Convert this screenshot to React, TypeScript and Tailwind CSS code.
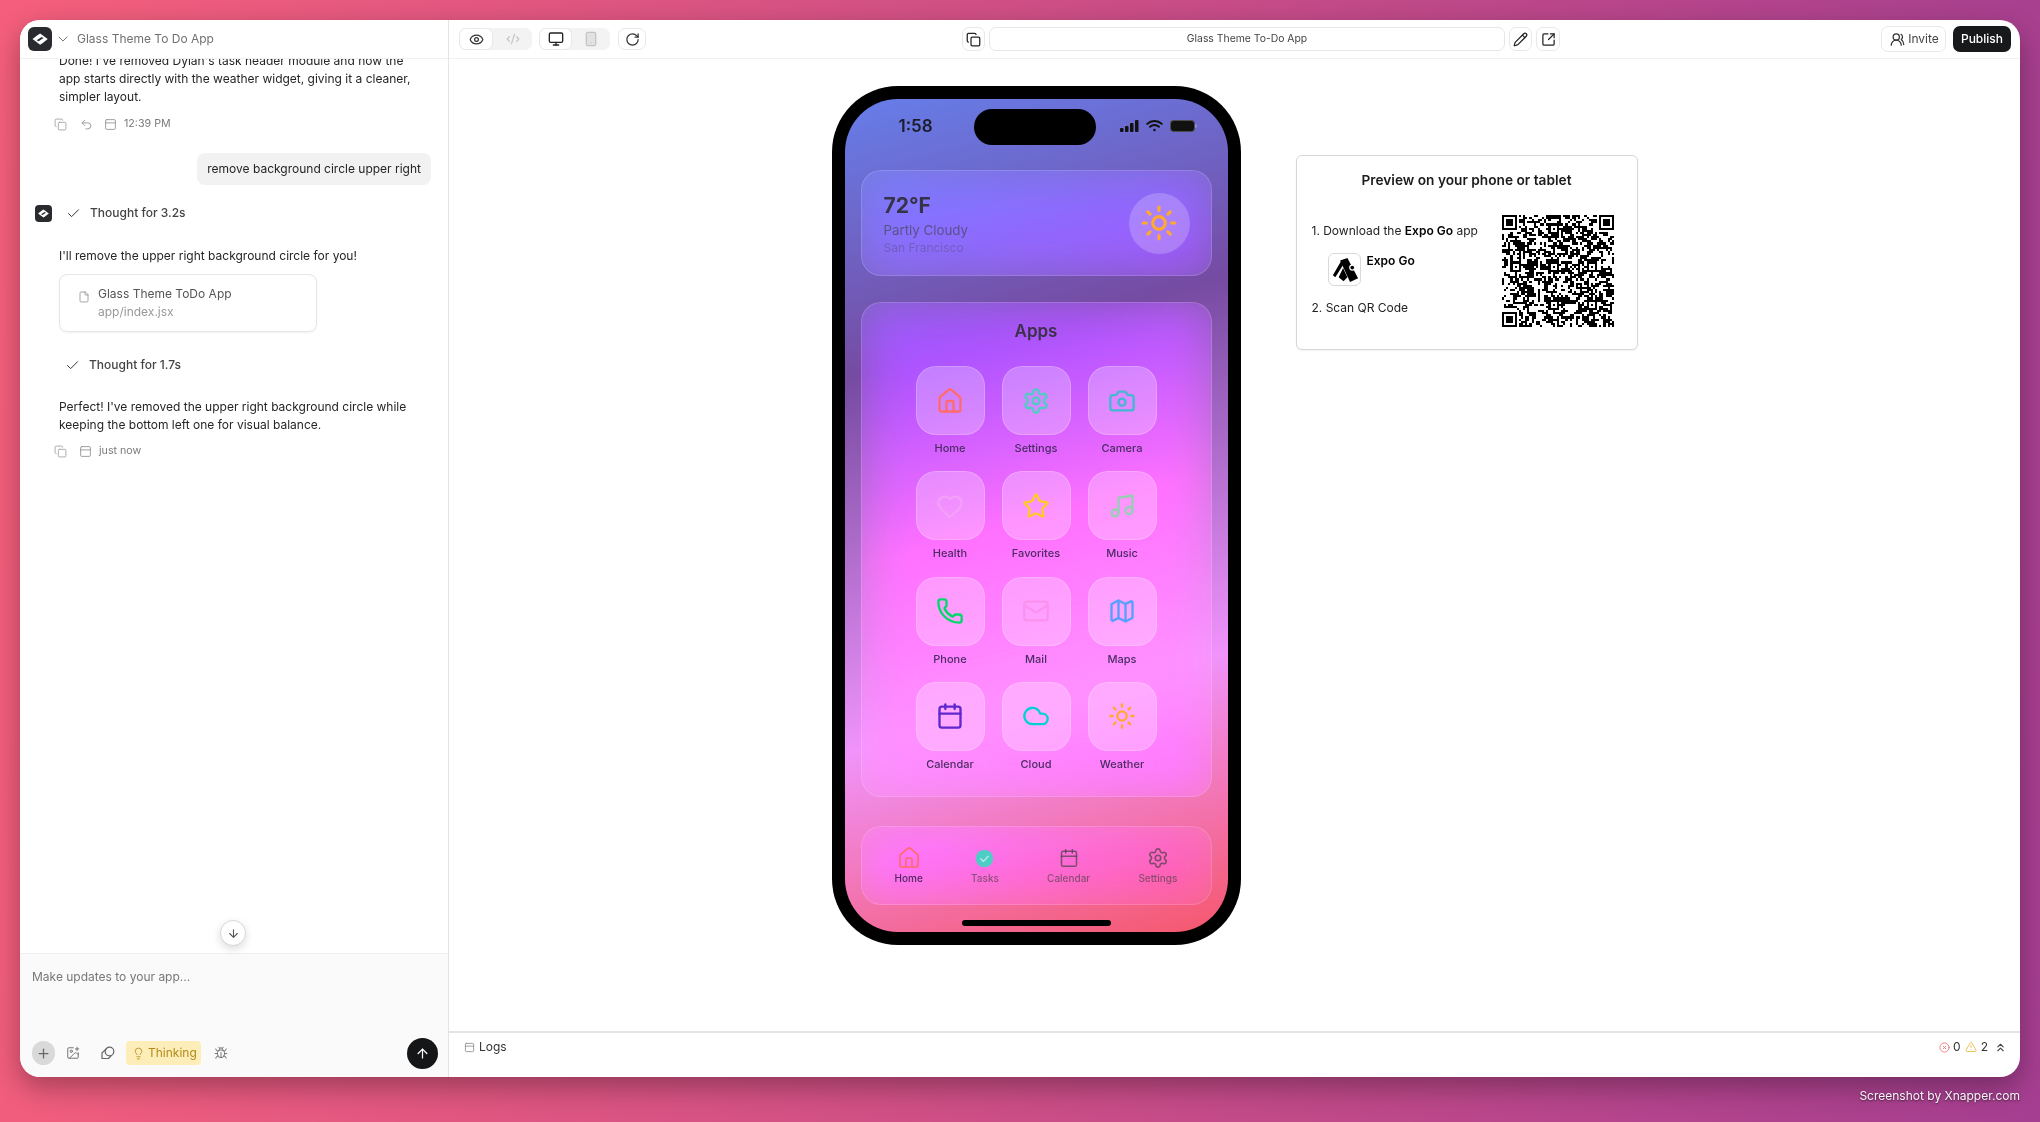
import React from "react";
import {
  House, Settings, Camera, Heart, Star, Music, Phone, Mail, Map as MapIcon, Calendar, Cloud, Sun,
  Copy, Undo2, PanelTop, File, Check, ChevronDown, ArrowDown, ArrowUp, Plus, ImagePlus,
  Lightbulb, Bug, Eye, CodeXml, Monitor, Smartphone, RotateCw, Pencil, SquareArrowOutUpRight,
  UsersRound, ChevronsUp, CircleX, TriangleAlert,
} from "lucide-react";

function Logo({ size, radius }: { size: number; radius: string }) {
  return (
    <div className={`flex items-center justify-center bg-[#2a2b2e] shrink-0 ${radius}`} style={{ width: size, height: size }}>
      <svg viewBox="0 0 24 24" width={size * 0.76} height={size * 0.76}>
        <path d="M12 4.500 22 12l-6.500 5-3.500 2.500L2 12l6.500-5z" fill="#fff" />
        <path d="M7.500 13.500 14 9.300l2.500 1.200-6.500 4.200z" fill="#2a2b2e" />
      </svg>
    </div>
  );
}

function QR() {
  const n = 53;
  let seed = 48271;
  const rnd = () => {
    seed = (seed * 16807) % 2147483647;
    return seed / 2147483647;
  };
  const grid: boolean[][] = [];
  for (let y = 0; y < n; y++) {
    const row: boolean[] = [];
    for (let x = 0; x < n; x++) {
      const prevL = x > 0 ? row[x - 1] : false;
      const prevT = y > 0 ? grid[y - 1][x] : false;
      row.push(rnd() < 0.36 + (prevL ? 0.14 : 0) + (prevT ? 0.14 : 0));
    }
    grid.push(row);
  }
  const stamp = (cx: number, cy: number, size: number, quiet: boolean) => {
    for (let y = -1; y <= size; y++)
      for (let x = -1; x <= size; x++) {
        const gx = cx + x;
        const gy = cy + y;
        if (gx < 0 || gy < 0 || gx >= n || gy >= n) continue;
        const outside = x < 0 || y < 0 || x >= size || y >= size;
        if (outside) {
          if (quiet) grid[gy][gx] = false;
          continue;
        }
        const ring = x === 0 || y === 0 || x === size - 1 || y === size - 1;
        const mid = size === 7 ? x >= 2 && x <= 4 && y >= 2 && y <= 4 : x === 2 && y === 2;
        grid[gy][gx] = ring || mid;
      }
  };
  stamp(0, 0, 7, true);
  stamp(n - 7, 0, 7, true);
  stamp(0, n - 7, 7, true);
  [[22, 4], [4, 22], [22, 22], [40, 22], [22, 40], [40, 40]].forEach(([a, b]) => stamp(a, b, 5, false));
  let d = "";
  grid.forEach((r, y) => r.forEach((v, x) => { if (v) d += `M${x} ${y}h1v1h-1z`; }));
  return (
    <svg viewBox={`0 0 ${n} ${n}`} width={112} height={112} shapeRendering="crispEdges" className="shrink-0">
      <path d={d} fill="#000" />
    </svg>
  );
}

function Tile({ label, icon: I, color }: { label: string; icon: any; color: string }) {
  return (
    <div className="flex flex-col items-center">
      <div className="w-[69px] h-[69px] rounded-[20px] bg-white/25 border border-white/20 flex items-center justify-center">
        <I size={28} color={color} strokeWidth={2} />
      </div>
      <div className="mt-[6px] h-[14px] leading-[14px] text-[11px] font-medium text-[#4b2c63] whitespace-nowrap">{label}</div>
    </div>
  );
}

function NavItem({ label, active, children }: { label: string; active?: boolean; children: React.ReactNode }) {
  return (
    <div className="flex flex-col items-center">
      <div className="h-6 flex items-center justify-center">{children}</div>
      <div className={`mt-[1px] text-[10px] leading-[14px] font-medium ${active ? "text-[#4f2a63]" : "text-[#3c3c3c]/60"}`}>{label}</div>
    </div>
  );
}

function Actions({ undo, time }: { undo?: boolean; time: string }) {
  return (
    <div className="flex items-center h-[14px] ml-[-5px] text-[#9a9a9a]">
      <Copy size={13} strokeWidth={1.5} />
      {undo && <Undo2 size={13} strokeWidth={1.5} className="ml-[13px] text-[#8a8a8a]" />}
      <PanelTop size={13} strokeWidth={1.5} className={undo ? "ml-[11px] text-[#8a8a8a]" : "ml-3 text-[#8a8a8a]"} />
      <span className="ml-[7px] text-[10.700px] text-[#7a7a7a]">{time}</span>
    </div>
  );
}

function Thought({ t, className }: { t: string; className?: string }) {
  return (
    <div className={`flex items-center h-[18px] text-[12px] font-medium text-[#444] ${className ?? ""}`}>
      <Check size={15} strokeWidth={1.6} className="text-[#333] mr-[9px]" />
      {t}
    </div>
  );
}

function Sidebar() {
  return (
    <aside className="w-[429px] shrink-0 border-r border-[#e4e4e4] flex flex-col">
      <div className="h-[39px] shrink-0 border-b border-[#f1f1f1] flex items-center pl-[8px] relative z-10 bg-white">
        <Logo size={24} radius="rounded-[6px]" />
        <ChevronDown size={16} strokeWidth={1.5} className="ml-[3px] text-[#777]" />
        <span className="ml-[6px] text-[12px] text-[#717171]">Glass Theme To Do App</span>
      </div>
      <div className="flex-1 relative min-h-0">
        <div className="h-full overflow-hidden">
          <div className="-mt-[7px] pl-[39px] pr-[17px] text-[12px] leading-[18px] text-[#252525]">
            <p className="w-[365px]">Done! I've removed Dylan's task header module and now the app starts directly with the weather widget, giving it a cleaner, simpler layout.</p>
            <div className="mt-[11px]"><Actions undo time="12:39 PM" /></div>
            <div className="mt-[22px] flex justify-end">
              <div className="h-8 flex items-center px-[10px] rounded-lg bg-[#f2f2f2] whitespace-nowrap">remove background circle upper right</div>
            </div>
            <div className="mt-[19px] -ml-6 flex items-center">
              <Logo size={17} radius="rounded-[4px]" />
              <Thought t="Thought for 3.2s" className="ml-[14px]" />
            </div>
            <p className="mt-[25px]">I'll remove the upper right background circle for you!</p>
            <div className="mt-[9px] w-[258px] h-[58px] rounded-lg border border-[#e6e6e6] shadow-[0_1px_2px_rgba(0,0,0,0.06)] flex items-start pl-[18px] pt-[10px]">
              <File size={12} strokeWidth={1.5} className="text-[#888] mt-[6px]" />
              <div className="ml-[8px]">
                <div className="text-[#555]">Glass Theme ToDo App</div>
                <div className="text-[#999]">app/index.jsx</div>
              </div>
            </div>
            <Thought t="Thought for 1.7s" className="mt-[24px] ml-[6px]" />
            <p className="mt-[24px]">Perfect! I've removed the upper right background circle while keeping the bottom left one for visual balance.</p>
            <div className="mt-[10px]"><Actions time="just now" /></div>
          </div>
        </div>
        <div className="absolute left-[200px] bottom-[7px] w-[26px] h-[26px] rounded-full bg-white border border-[#d8d8d8] shadow-[0_3px_8px_rgba(0,0,0,0.14)] flex items-center justify-center">
          <ArrowDown size={13} className="text-[#555]" />
        </div>
      </div>
      <div className="h-[124px] shrink-0 bg-[#fafafa] border-t border-[#f0f0f0] flex flex-col px-3 pb-[12px] rounded-bl-[20px]">
        <div className="pt-[14px] text-[12px] leading-[18px] text-[#777]">Make updates to your app...</div>
        <div className="mt-auto flex items-center h-[24px]">
          <div className="w-[23px] h-[24px] rounded-full bg-[#d9d9d9] flex items-center justify-center"><Plus size={15} className="text-[#666]" /></div>
          <ImagePlus size={14} strokeWidth={1.5} className="ml-[11px] text-[#666]" />
          <svg width="14" height="14" viewBox="0 0 14 14" fill="none" stroke="#666" strokeWidth="1.200" strokeLinejoin="round" className="ml-[21px]">
            <circle cx="8.500" cy="5.500" r="4.300" />
            <path d="M5.200 2.900 1 7v5.500h6.500L10.500 9.300" />
          </svg>
          <div className="ml-[11px] h-[24px] w-[75px] rounded-[4px] bg-[#fdeeb9] text-[#b38a1b] text-[12px] flex items-center pl-[6px] gap-[3px]">
            <Lightbulb size={13} strokeWidth={1.5} className="shrink-0" />
            Thinking
          </div>
          <Bug size={14} strokeWidth={1.5} className="ml-[13px] text-[#666]" />
          <div className="ml-auto -mr-[2px] w-[31px] h-[31px] rounded-full bg-[#151617] flex items-center justify-center">
            <ArrowUp size={15} className="text-white" />
          </div>
        </div>
      </div>
    </aside>
  );
}

const btn = "bg-white border border-[#e8e8e8] rounded-[7px] flex items-center justify-center";

function Toolbar() {
  return (
    <div className="h-[39px] shrink-0 border-b border-[#f1f1f1] flex items-center pl-[10px] pr-[9px] relative">
      <div className="flex w-[73px] h-[22px] bg-[#f3f3f3] rounded-[7px]">
        <div className={`${btn} w-[34px] h-full`}><Eye size={15} className="text-[#333]" /></div>
        <div className="flex-1 flex items-center justify-center"><CodeXml size={14} className="text-[#c2c2c2]" /></div>
      </div>
      <div className="ml-[7px] flex w-[71px] h-[22px] bg-[#f3f3f3] rounded-[7px]">
        <div className={`${btn} w-[33px] h-full`}><Monitor size={16} className="text-[#222]" /></div>
        <div className="flex-1 flex items-center justify-center"><Smartphone size={16} className="text-[#c4c4c4]" fill="#e2e2e2" /></div>
      </div>
      <div className={`${btn} ml-[8px] w-[28px] h-[22px]`}><RotateCw size={15} className="text-[#333]" /></div>
      <div className={`${btn} ml-[316px] w-[23px] h-[24px]`}><Copy size={15} className="text-[#222]" /></div>
      <div className="ml-[4px] w-[516px] h-[24px] bg-white border border-[#e6e6e6] rounded-[7px] flex items-center justify-center text-[10.400px] text-[#444]">Glass Theme To-Do App</div>
      <div className={`${btn} ml-[4px] w-[23px] h-[24px]`}><Pencil size={15} className="text-[#222]" /></div>
      <div className={`${btn} ml-[4px] w-[24px] h-[24px]`}><SquareArrowOutUpRight size={15} className="text-[#222]" /></div>
      <div className={`${btn} ml-auto w-[65px] h-[26px] text-[12px] text-[#444] gap-[3px] pl-[2px]`}>
        <UsersRound size={15} className="text-[#333]" />Invite
      </div>
      <div className="ml-[7px] w-[58px] h-[26px] rounded-[7px] bg-[#18191b] text-white text-[12px] font-medium flex items-center justify-center">Publish</div>
    </div>
  );
}

function StatusBar() {
  return (
    <div className="h-[71px] shrink-0 relative flex items-start justify-between pl-[38px] pr-[15px] pt-[16px]">
      <span className="text-[17px] leading-[22px] font-semibold text-[#1c1c2a]">1:58</span>
      <div className="absolute left-[113px] top-[10px] w-[122px] h-[36px] rounded-[18px] bg-black" />
      <div className="flex items-center gap-[7px] h-[22px]">
        <svg width="19" height="12" viewBox="0 0 19 12" fill="#111">
          <rect x="0" y="8" width="3.500" height="4" rx="1" />
          <rect x="5" y="6" width="3.500" height="6" rx="1" />
          <rect x="10" y="3" width="3.500" height="9" rx="1" />
          <rect x="15" y="0" width="3.500" height="12" rx="1" />
        </svg>
        <svg width="17" height="12" viewBox="0 0 17 12" fill="none" stroke="#111" strokeWidth="1.900" strokeLinecap="round">
          <path d="M1.200 3.900a10.500 10.500 0 0 1 14.600 0" />
          <path d="M4 6.800a6.400 6.400 0 0 1 9 0" />
          <circle cx="8.500" cy="10" r="1.300" fill="#111" stroke="none" />
        </svg>
        <div className="flex items-center">
          <div className="w-[25px] h-[12px] rounded-[4px] border border-white/25 bg-[#111]" />
          <div className="w-[1.500px] h-[4px] bg-white/25 rounded-r-sm" />
        </div>
      </div>
    </div>
  );
}

function PhoneMock() {
  const apps: [string, any, string][] = [
    ["Home", House, "#ff6b6b"], ["Settings", Settings, "#4ecdc4"], ["Camera", Camera, "#45b7d1"],
    ["Health", Heart, "#f4a0f9"], ["Favorites", Star, "#feca28"], ["Music", Music, "#96ceb4"],
    ["Phone", Phone, "#00d96a"], ["Mail", Mail, "#fa92ee"], ["Maps", MapIcon, "#54a0ff"],
    ["Calendar", Calendar, "#5f27cd"], ["Cloud", Cloud, "#00d2d3"], ["Weather", Sun, "#ffa92e"],
  ];
  const glass = "backdrop-blur-xl backdrop-saturate-[2] backdrop-brightness-[1.12] bg-white/[0.08] border border-white/15 rounded-[20px]";
  return (
    <div className="w-[409px] h-[859px] shrink-0 rounded-[66px] bg-black p-[13px]">
      <div className="h-full rounded-[53px] overflow-hidden relative flex flex-col px-[16px] bg-[linear-gradient(165deg,#667eea_0%,#764ba2_30%,#f093fb_70%,#f5576c_100%)]">
        <StatusBar />
        <div className={`${glass} h-[106px] shrink-0 flex items-center justify-between pl-[22px] pr-[21px]`}>
          <div className="pt-[2px]">
            <div className="text-[21px] leading-[26px] font-bold text-[#363247]">72°F</div>
            <div className="text-[13.300px] leading-[20px] mt-[1px] text-[#3c3c3c]/60">Partly Cloudy</div>
            <div className="text-[12px] leading-[16px] text-[#3c3c3c]/30">San Francisco</div>
          </div>
          <div className="w-[61px] h-[61px] rounded-full bg-white/20 flex items-center justify-center">
            <Sun size={38} color="#ffa92e" strokeWidth={2} />
          </div>
        </div>
        <div className={`${glass} mt-[26px] h-[495px] shrink-0 flex flex-col items-center`}>
          <div className="mt-[15px] h-[26px] leading-[26px] text-[17px] font-semibold text-[#3b3148]">Apps</div>
          <div className="mt-[22px] grid grid-cols-[69px_69px_69px] gap-x-[17px] gap-y-[16.300px]">
            {apps.map(([l, i, c]) => <Tile key={l} label={l} icon={i} color={c} />)}
          </div>
        </div>
        <div className={`${glass} mt-[29px] h-[79px] shrink-0 flex items-center justify-around px-[9px]`}>
          <NavItem label="Home" active><House size={24} color="#ff6b6b" strokeWidth={1.7} /></NavItem>
          <NavItem label="Tasks">
            <svg width="21" height="21" viewBox="0 0 21 21">
              <circle cx="10.500" cy="10.500" r="8.700" fill="#4ecdc4" />
              <path d="M6.800 10.800l2.600 2.600 4.800-5.200" fill="none" stroke="#fff" strokeOpacity="0.55" strokeWidth="1.500" strokeLinecap="round" strokeLinejoin="round" />
            </svg>
          </NavItem>
          <NavItem label="Calendar"><Calendar size={20} className="text-[#3c3c3c]/65" strokeWidth={1.8} /></NavItem>
          <NavItem label="Settings"><Settings size={22} className="text-[#3c3c3c]/65" strokeWidth={1.7} /></NavItem>
        </div>
        <div className="absolute left-[117px] bottom-[6px] w-[149px] h-[6px] rounded-full bg-black" />
      </div>
    </div>
  );
}

function PreviewCard() {
  return (
    <div className="w-[342px] h-[195px] mt-[69px] shrink-0 rounded-[6px] border border-[#d6d6d6] bg-white shadow-[0_1px_2px_rgba(0,0,0,0.05)] flex flex-col">
      <div className="mt-[14px] h-[20px] leading-[20px] text-center text-[13.700px] font-semibold text-[#1c1c1c]">Preview on your phone or tablet</div>
      <div className="flex justify-between pl-[15px] pr-[23px] mt-[25px]">
        <div className="text-[12px] leading-[18px] text-[#222]">
          <div className="mt-[7px]">1. Download the <b className="font-semibold text-black">Expo Go</b> app</div>
          <div className="flex mt-[13px] ml-[16px]">
            <div className="w-[33px] h-[33px] rounded-[6px] border border-[#d9d9d9] flex items-center justify-center">
              <svg viewBox="0 0 32 32" width="31" height="31">
                <path d="M11.500 6.700 19 4 30 25 21.700 29z" fill="#000" />
                <path d="M4 22 13 6.500 15 10.500 6.500 24z" fill="#000" />
                <path d="M10 24 14.500 14.500 19 24 15 28z" fill="#000" />
                <circle cx="24" cy="14" r="3.200" fill="#fff" />
                <circle cx="24" cy="14" r="1.900" fill="#000" />
              </svg>
            </div>
            <b className="ml-[6px] font-semibold text-black -mt-[1px]">Expo Go</b>
          </div>
          <div className="mt-[13px]">2. Scan QR Code</div>
        </div>
        <QR />
      </div>
    </div>
  );
}

export default function App() {
  return (
    <div className="w-[2040px] h-[1122px] overflow-hidden flex flex-col bg-[linear-gradient(95deg,#f55f7c_0%,#a53e90_100%)] font-['Inter',sans-serif]">
      <div className="mx-[20px] mt-[20px] h-[1057px] shrink-0 rounded-[20px] bg-white flex overflow-hidden shadow-[0_10px_28px_rgba(0,0,0,0.32)]">
        <Sidebar />
        <main className="flex-1 min-w-0 flex flex-col">
          <Toolbar />
          <div className="flex-1 min-h-0 flex justify-center gap-[55px] pt-[27px]">
            <PhoneMock />
            <PreviewCard />
          </div>
          <div className="h-[46px] shrink-0 border-t-2 border-[#e4e4e4] flex items-start justify-between pl-[15px] pr-[13px] pt-[5px] text-[12px] leading-[18px] text-[#333]">
            <div className="flex items-center gap-[4px]"><PanelTop size={11} strokeWidth={1.500} className="text-[#777]" />Logs</div>
            <div className="flex items-center">
              <CircleX size={11} className="text-[#ee7b7b]" />
              <span className="ml-[3px]">0</span>
              <TriangleAlert size={12} className="ml-[4px] text-[#eec35a]" />
              <span className="ml-[4px]">2</span>
              <ChevronsUp size={13} className="ml-[6px] text-[#444]" />
            </div>
          </div>
        </main>
      </div>
      <div className="flex-1 flex items-center justify-end pr-[20px] pb-[8px] text-[12px] text-white/95 [text-shadow:0_1px_2px_rgba(0,0,0,0.6)]">Screenshot by Xnapper.com</div>
    </div>
  );
}
